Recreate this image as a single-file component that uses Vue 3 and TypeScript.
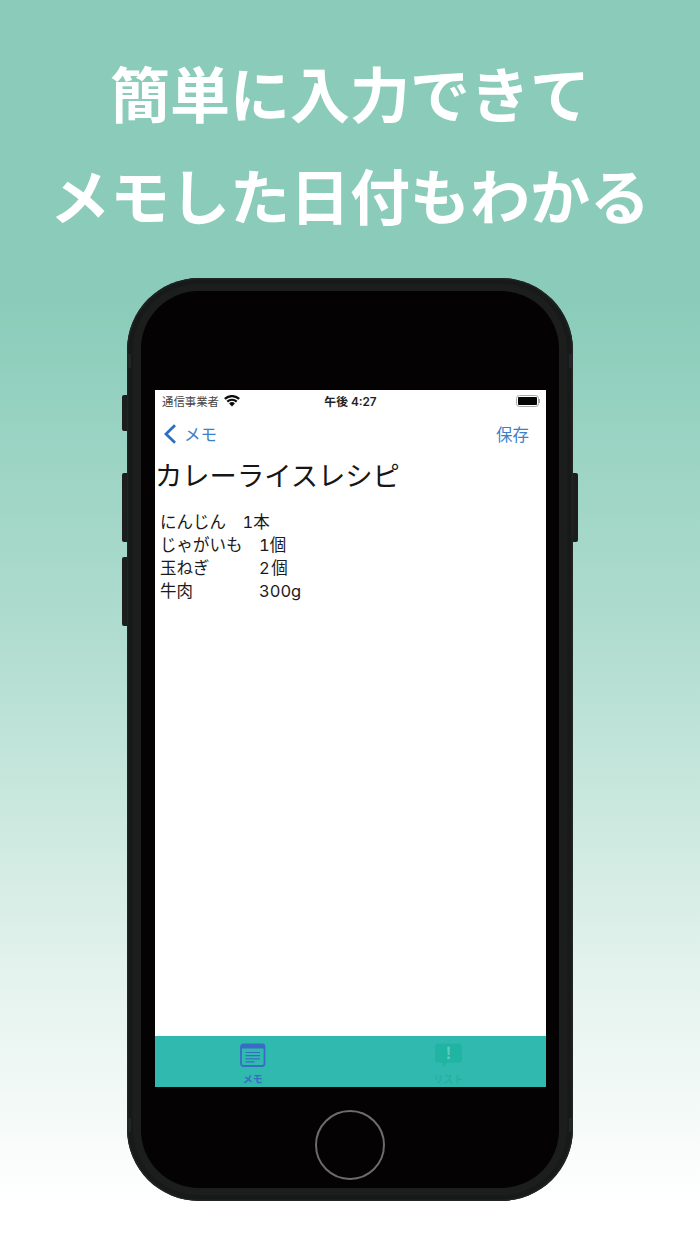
<script setup lang="ts">
const rows: { name: string; qty: string; wide: boolean }[] = [
  { name: 'にんじん', qty: '1本', wide: false },
  { name: 'じゃがいも', qty: '1個', wide: true },
  { name: '玉ねぎ', qty: '2\u200a個', wide: true },
  { name: '牛肉', qty: '300g', wide: true },
]
</script>

<template>
  <div class="page">
    <header class="headline">
      <div>簡単に入力できて</div>
      <div>メモした日付もわかる</div>
    </header>

    <div class="phone">
      <span class="btn mute"></span>
      <span class="btn volup"></span>
      <span class="btn voldown"></span>
      <span class="btn power"></span>
      <span class="band b1"></span>
      <span class="band b2"></span>
      <span class="band b3"></span>
      <span class="band b4"></span>

      <div class="bezel">
        <div class="screen">
          <div class="status">
            <div class="status-left">
              <span>通信事業者</span>
              <svg class="wifi" viewBox="0 0 18 13" width="16" height="12">
                <path d="M9 12.800 5.700 9.200a4.700 4.700 0 0 1 6.600 0Z" fill="#0c0c0c" />
                <path d="M4.500 8.100A6.500 6.500 0 0 1 13.500 8.100l1.600-1.800a8.900 8.900 0 0 0-12.200 0Z" fill="#0c0c0c" />
                <path d="M1.800 5.100a10.600 10.600 0 0 1 14.400 0L17.900 3.200A13 13 0 0 0 .1 3.200Z" fill="#0c0c0c" />
              </svg>
            </div>
            <div class="time">午後 4:27</div>
            <div class="status-right">
              <span class="battery"><span class="level"></span></span>
              <span class="nub"></span>
            </div>
          </div>

          <nav class="nav">
            <div class="back">
              <svg viewBox="0 0 14 20" width="14" height="20">
                <path d="M12 1.200 3 10l9 8.800" fill="none" stroke="#2f6fc0" stroke-width="2.800" />
              </svg>
              <span>メモ</span>
            </div>
            <span class="save">保存</span>
          </nav>

          <h1 class="title">カレーライスレシピ</h1>

          <div class="memo">
            <div v-for="row in rows" :key="row.name" class="line">
              <span class="name" :class="{ wide: row.wide }">{{ row.name }}</span>
              <span>{{ row.qty }}</span>
            </div>
          </div>

          <footer class="tabs">
            <div class="tab active">
              <svg viewBox="0 0 26 24" width="26" height="24">
                <rect x="1" y="1" width="23.500" height="21.500" rx="2.500" fill="none" stroke="#3a6cc4" stroke-width="1.800" />
                <path d="M1 3.500A2.500 2.500 0 0 1 3.500 1h18.500A2.500 2.500 0 0 1 24.500 3.500V5H1Z" fill="#3a6cc4" />
                <path d="M5.500 9h14.500M5.500 12.200h14.500M5.500 15.400h14.500M5.500 18.400h9" stroke="#3a6cc4" stroke-width="1.200" fill="none" />
              </svg>
              <span>メモ</span>
            </div>
            <div class="tab muted">
              <svg viewBox="0 0 28 25" width="27" height="25">
                <path d="M3.500 0h21A3.500 3.500 0 0 1 28 3.500v13a3.500 3.500 0 0 1-3.500 3.500H12.500l-4 4.500-.6-4.500H3.500A3.500 3.500 0 0 1 0 16.500v-13A3.500 3.500 0 0 1 3.500 0Z" fill="#20b5a3" />
                <path d="M12.700 3.500h2.800l-.5 8.500h-1.800ZM14.100 13.300a1.600 1.600 0 1 1 0 3.200 1.600 1.600 0 0 1 0-3.200Z" fill="#5fcbbd" />
              </svg>
              <span>リスト</span>
            </div>
          </footer>
        </div>

        <div class="chin">
          <span class="home"></span>
        </div>
      </div>
    </div>
  </div>
</template>

<style>
html,
body {
  margin: 0;
  background: #fff;
}
</style>

<style scoped>
.page {
  width: 700px;
  height: 1244px;
  overflow: hidden;
  box-sizing: border-box;
  padding-top: 41px;
  background: linear-gradient(180deg, #8accb9 0%, #8accb9 24%, #aedcce 50%, #e3f2ed 78%, #ffffff 97%);
  font-family: Inter, "Noto Sans CJK JP", sans-serif;
}

.headline {
  height: 237px;
  color: #fff;
  text-align: center;
  font-family: "Noto Sans CJK JP", sans-serif;
  font-size: 60px;
  font-weight: 700;
  line-height: 102px;
}

.phone {
  position: relative;
  width: 446px;
  height: 923px;
  margin: 0 auto;
  box-sizing: border-box;
  padding: 6px;
  border-radius: 72px;
  background: #181a1a;
  box-shadow: inset 0 0 0 1.500px #212424;
}

.bezel {
  display: flex;
  flex-direction: column;
  height: 100%;
  box-sizing: border-box;
  padding: 7px 8px;
  border-radius: 66px;
  background: #1c1e1e;
}

.screen {
  display: flex;
  flex-direction: column;
  flex: none;
  height: 796px;
  margin: 0;
  border-radius: 58px 58px 0 0;
  background: #040202;
  box-sizing: border-box;
  padding: 99px 13px 0 14px;
}

.status {
  position: relative;
  display: flex;
  align-items: center;
  justify-content: space-between;
  flex: none;
  height: 21px;
  padding: 0 6px 0 7px;
  background: #fff;
  font-size: 11.400px;
  color: #444;
}

.status-left {
  display: flex;
  align-items: center;
  gap: 5px;
}

.wifi {
  display: block;
}

.time {
  position: absolute;
  left: 0;
  right: 0;
  text-align: center;
  font-size: 11.800px;
  font-weight: 600;
  color: #222;
}

.status-right {
  display: flex;
  align-items: center;
}

.battery {
  display: block;
  box-sizing: border-box;
  width: 23px;
  height: 12px;
  padding: 1px;
  border: 1.500px solid #a8a8a8;
  border-radius: 3.500px;
}

.level {
  display: block;
  height: 100%;
  border-radius: 1px;
  background: #050505;
}

.nub {
  display: block;
  width: 1.500px;
  height: 4px;
  background: #a8a8a8;
}

.nav {
  display: flex;
  align-items: center;
  justify-content: space-between;
  flex: none;
  height: 46px;
  padding: 0 17px 0 8px;
  background: #fff;
  color: #3f7fca;
  font-size: 16.500px;
}

.back {
  display: flex;
  align-items: center;
  gap: 7px;
}

.back svg {
  display: block;
}

.title {
  flex: none;
  margin: 0;
  height: 40px;
  background: #fff;
  color: #161616;
  font-size: 27.300px;
  font-weight: 400;
  line-height: 40px;
  white-space: nowrap;
}

.memo {
  flex: 1;
  padding: 14px 5px 0;
  background: #fff;
  color: #1b1b1b;
  font-size: 16.500px;
  font-variant-numeric: tabular-nums;
  line-height: 23px;
}

.line {
  display: flex;
}

.name {
  width: 82.500px;
}

.name.wide {
  width: 99px;
}

.tabs {
  display: grid;
  grid-template-columns: 1fr 1fr;
  flex: none;
  height: 51px;
  background: #30b9ae;
}

.tab {
  display: flex;
  flex-direction: column;
  align-items: center;
  padding-top: 7px;
  box-sizing: border-box;
  font-size: 10px;
  font-weight: 700;
  line-height: 13px;
}

.tab svg {
  display: block;
  height: 25px;
  margin-bottom: 5px;
}

.tab.active {
  color: #3a6cc4;
}

.tab.muted {
  color: #23b2a2;
}

.chin {
  display: flex;
  justify-content: center;
  flex: 1;
  margin: 0;
  padding-top: 23px;
  box-sizing: border-box;
  border-radius: 0 0 58px 58px;
  background: #040202;
}

.home {
  display: block;
  width: 70px;
  height: 70px;
  box-sizing: border-box;
  border: 2px solid #6c6c6c;
  border-radius: 50%;
}

.btn {
  position: absolute;
  width: 5px;
  background: #1c1e1e;
}

.mute {
  left: -5px;
  top: 117px;
  height: 36px;
  border-radius: 2px 0 0 2px;
}

.volup {
  left: -5px;
  top: 195px;
  height: 69px;
  border-radius: 2px 0 0 2px;
}

.voldown {
  left: -5px;
  top: 279px;
  height: 69px;
  border-radius: 2px 0 0 2px;
}

.power {
  right: -5px;
  top: 195px;
  height: 69px;
  border-radius: 0 2px 2px 0;
}

.band {
  position: absolute;
  width: 4px;
  height: 14px;
  background: #232626;
}

.b1 {
  left: 0;
  top: 76px;
}

.b2 {
  right: 0;
  top: 76px;
}

.b3 {
  left: 0;
  top: 840px;
}

.b4 {
  right: 0;
  top: 840px;
}
</style>
